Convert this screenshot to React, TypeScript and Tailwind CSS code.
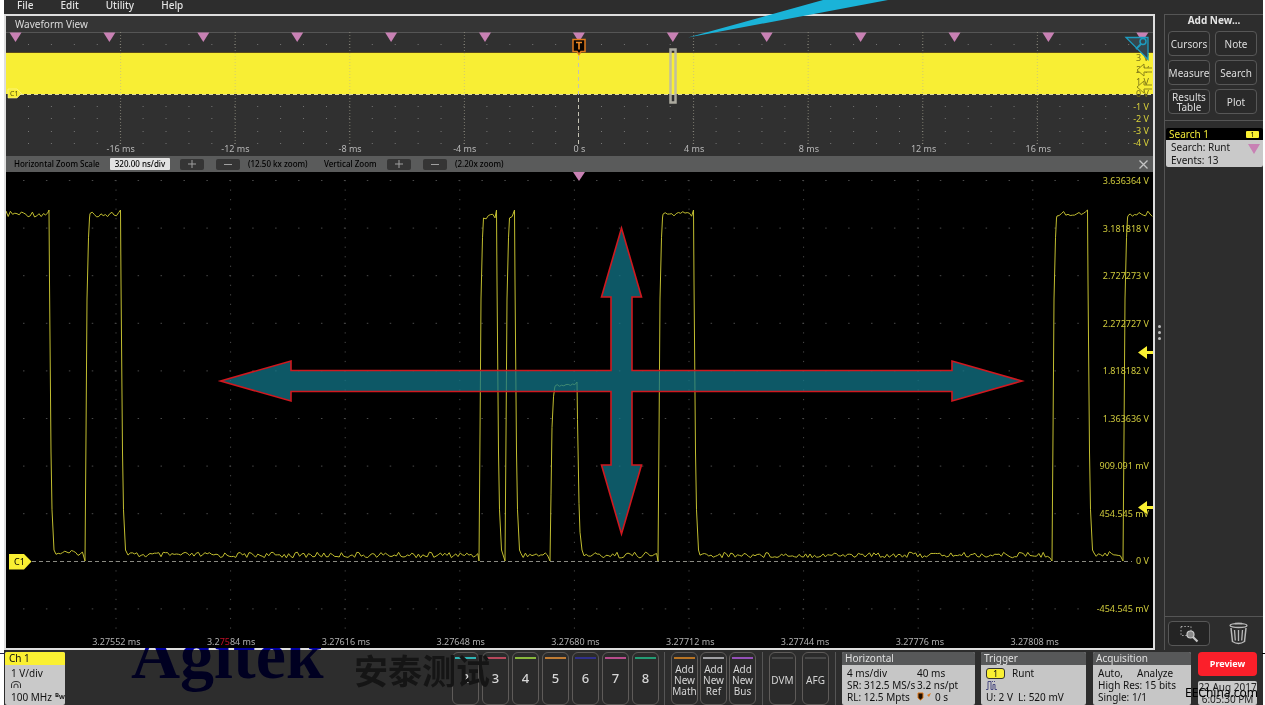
import type { ReactNode } from "react";

const PLOT_W = 1147;
const OVERVIEW_H = 124;
const ZOOM_H = 476;

const topTimes = ["-16 ms", "-12 ms", "-8 ms", "-4 ms", "0 s", "4 ms", "8 ms", "12 ms", "16 ms"];
const bottomTimes = ["3.27552", "3.27584", "3.27616", "3.27648", "3.27680", "3.27712", "3.27744", "3.27776", "3.27808"];
const topVolts = ["3 V", "2 V", "1 V", "0 V", "-1 V", "-2 V", "-3 V", "-4 V"];
const bottomVolts = [
  "3.636364 V", "3.181818 V", "2.727273 V", "2.272727 V", "1.818182 V",
  "1.363636 V", "909.091 mV", "454.545 mV", "0 V", "-454.545 mV",
];

const range = (n: number) => Array.from({ length: n }, (_, i) => i);

/* Deterministic noise in the range -1..1 */
const noise = (i: number) => {
  const s = Math.sin(i * 12.9898) * 43758.5453;
  return (s - Math.floor(s)) * 2 - 1;
};

function tracePoints() {
  const pts: string[] = [];
  let n = 0;
  const add = (x: number, y: number) => pts.push(`${x.toFixed(1)},${y.toFixed(1)}`);
  const flat = (from: number, to: number, y: number, amp: number) => {
    for (let x = from; x < to; x += 2.2) add(x, y + noise(n++) * amp);
  };
  const rise = (x: number, base: number, top: number) => {
    const h = base - top;
    add(x, base + 7);
    add(x + 1, base - h * 0.35);
    add(x + 2, base - h * 0.75);
    add(x + 3.5, base - h * 0.93);
    add(x + 4.5, top + 4);
  };
  const fall = (x: number, base: number, top: number) => {
    const h = base - top;
    add(x, top - 4);
    add(x + 0.5, top + h * 0.2);
    add(x + 2, top + h * 0.7);
    add(x + 3, top + h * 0.87);
    add(x + 5, base - 4);
  };
  const hi = 42;
  const lo = 382;
  flat(0, 43, hi, 3);
  fall(43, lo, hi);
  flat(50, 78, lo - 1, 2.5);
  rise(79, lo, hi);
  flat(84, 114, hi, 3);
  fall(114.5, lo, hi);
  flat(122, 472, lo + 1, 2.8);
  rise(473, lo, hi);
  flat(478, 490, hi + 2, 3);
  fall(490.5, lo, hi);
  rise(499, lo, hi);
  flat(504, 508, hi + 2, 3);
  fall(508.5, lo, hi);
  flat(515, 543, lo + 1, 2.5);
  rise(544, lo, 213);
  flat(549, 570, 213, 1.8);
  fall(571, lo, 214);
  flat(578, 651, lo + 1, 3);
  rise(652, lo, hi);
  flat(657, 687, hi, 3);
  fall(687.5, lo, hi);
  flat(694, 1045, lo + 1, 2.8);
  rise(1046, lo, hi);
  flat(1051, 1081, hi, 3);
  fall(1081.5, lo, hi);
  flat(1088, 1116, lo, 2.5);
  rise(1117, lo, hi);
  flat(1122, 1147, hi, 3);
  return pts.join(" ");
}

function OverviewPlot() {
  return (
    <section className="relative h-[124px] overflow-hidden bg-[#303030]">
      <svg className="absolute inset-0 h-full w-full" viewBox={`0 0 ${PLOT_W} ${OVERVIEW_H}`} preserveAspectRatio="none">
        <line x1="0" x2={PLOT_W} y1="0.5" y2="0.5" stroke="#555" />
        {[12.5, 74.5, 86.5, 99.5, 111.5].map((y) => (
          <line key={y} x1="22" x2="1135" y1={y} y2={y} stroke="#777" strokeDasharray="1 21.92" />
        ))}
        <rect x="0" y="21" width={PLOT_W} height="41" fill="#f8ee34" />
        <line x1="0" x2={PLOT_W} y1="20.5" y2="20.5" stroke="#5a4a1c" />
        {range(9).filter((i) => i !== 4).map((i) => (
          <line key={i} x1={114.6 * (i + 1)} x2={114.6 * (i + 1)} y1="0" y2="112" stroke="#b5b09a" strokeOpacity=".55" strokeDasharray="1 2" />
        ))}
        <line x1="572.500" x2="572.500" y1="24" y2="112" stroke="#c4c2b4" strokeDasharray="4 3" />
        <line x1="14" x2={PLOT_W} y1="62.5" y2="62.5" stroke="#ddd9a0" strokeDasharray="4 3" />
        <path d="M2 57h9l4.5 4.5L11 66H2z" fill="#f8ee34" stroke="#fff9a0" strokeWidth=".6" />
        {range(13).map((i) => {
          const x = 9.5 + i * 93.9;
          return <path key={i} d={`M${x - 6} 0.5h12l-6 9.5z`} fill="#c881b4" />;
        })}
        <path d="M567 7.500h12v12h-4l-2 3-2-3h-4z" fill="#0a0500" stroke="#e07a1c" strokeWidth="1.5" />
        <path d="M570 10.500h6M573 10.500v7" stroke="#f08a24" strokeWidth="1.600" fill="none" />
        <rect x="664.500" y="17.500" width="5" height="53" fill="none" stroke="#bab8ac" strokeOpacity=".9" strokeWidth="2.500" />
      </svg>
      <span className="absolute top-[57px] left-[4px] text-[7px] leading-[9px] text-[#55500c]">C1</span>
      <div className="absolute inset-x-0 bottom-0 grid grid-cols-9 px-[5%] text-center text-[9px] leading-[14px] text-[#b8b8b8]">
        {topTimes.map((t) => <span key={t}>{t}</span>)}
      </div>
      <div className="absolute top-[20px] right-[4px] flex h-[97px] flex-col justify-between text-right text-[9px] leading-[12px]">
        {topVolts.map((v, i) => (
          <span key={v} className={i < 4 ? "text-[#77701a]" : "text-[#d9d23a]"}>{v}</span>
        ))}
      </div>
      <svg className="absolute top-0 right-0 h-[66px] w-[30px]" viewBox="0 0 30 66">
        <path d="M3 5.500h22v22z" fill="#34464d" stroke="#1d9cc0" strokeWidth="1.300" />
        <circle cx="20" cy="9.500" r="3" fill="none" stroke="#1d9cc0" strokeWidth="1.500" />
        <path d="M18 12l-5 5" stroke="#1d9cc0" strokeWidth="1.800" />
        <path d="M29 36h-8v-4l-7 6 7 6v-4h8M29 53h-8v-4l-7 6 7 6v-4h8" fill="#f8ee34" stroke="#8f8718" />
      </svg>
    </section>
  );
}

function ZoomBar() {
  const step = "flex h-[11px] w-6 items-center justify-center rounded-[2px] bg-[#353535] text-[#a0a0a0]";
  const minus = <svg className="h-2 w-2" viewBox="0 0 8 8"><path d="M0 4.500h8" stroke="currentColor" /></svg>;
  const plus = <svg className="h-2 w-2" viewBox="0 0 8 8"><path d="M0 4h8M4 0v8" stroke="currentColor" /></svg>;
  return (
    <div className="flex h-4 items-center bg-[#5a5b5b] pr-[5px] pl-[8px] text-[8px] leading-4 font-medium text-black">
      <label htmlFor="scale" className="w-[96px]">Horizontal Zoom Scale</label>
      <input id="scale" defaultValue="320.00 ns/div" className="h-[12px] w-[60px] rounded-[1px] bg-[#e2e2e2] text-center text-[8px] outline-none" />
      <button aria-label="Zoom in horizontally" className={`${step} ml-[10px]`}>{plus}</button>
      <button aria-label="Zoom out horizontally" className={`${step} ml-3`}>{minus}</button>
      <span className="ml-2 w-[76px]">(12.50 kx zoom)</span>
      <span className="w-[63px]">Vertical Zoom</span>
      <button aria-label="Zoom in vertically" className={step}>{plus}</button>
      <button aria-label="Zoom out vertically" className={`${step} ml-3`}>{minus}</button>
      <span className="ml-2">(2.20x zoom)</span>
      <button aria-label="Close zoom" className="ml-auto text-[#c4c4c4]">
        <svg className="h-[9px] w-[9px]" viewBox="0 0 9 9"><path d="M.500 .500l8 8M8.500 .500l-8 8" stroke="currentColor" strokeWidth="1.300" /></svg>
      </button>
    </div>
  );
}

function ZoomPlot() {
  return (
    <section className="relative min-h-[476px] flex-1 overflow-hidden bg-black">
      <svg className="absolute inset-0 h-full w-full" viewBox={`0 0 ${PLOT_W} ${ZOOM_H}`} preserveAspectRatio="none">
        {range(9).map((i) => (
          <line key={i} x1={110 + 114.6 * i} x2={110 + 114.6 * i} y1="8" y2="462" stroke="#4a4a4a" strokeDasharray="1.200 8.320" />
        ))}
        {range(10).filter((i) => i !== 8).map((i) => (
          <line key={i} x1="17" x2="1090" y1={8.5 + 47.6 * i} y2={8.5 + 47.6 * i} stroke="#4a4a4a" strokeDasharray="1.500 21.420" />
        ))}
        <line x1="26" x2="1126" y1="389.5" y2="389.5" stroke="#8a8a82" strokeDasharray="4 3" />
        <path d="M567 0h12l-6 9z" fill="#c881b4" />
        <polyline points={tracePoints()} fill="none" stroke="#c2be30" strokeWidth="1" strokeLinejoin="round" />
      </svg>
      <div className="absolute inset-x-0 bottom-0 z-10 grid grid-cols-9 pr-[61px] pl-[53px] text-center text-[9px] leading-[13px] text-[#b0b0b0]">
        {bottomTimes.map((t, i) => (
          <span key={t}>
            {i === 1 ? <>3.2<b className="font-normal text-[#c01028]">75</b>84</> : t} ms
          </span>
        ))}
      </div>
      <div className="absolute top-[2px] right-[4px] bottom-[33px] flex flex-col justify-between text-right text-[9px] leading-[13px] text-[#cfca3c]">
        {bottomVolts.map((v) => <span key={v}>{v}</span>)}
      </div>
      <svg className="absolute inset-0 h-full w-full" viewBox={`0 0 ${PLOT_W} ${ZOOM_H}`} preserveAspectRatio="none">
        <path d="M3 382h15l7.500 7.500-7.500 8H3z" fill="#faf032" />
        <path d="M1147 179h-6v-5l-9 6.500 9 6.500v-5h6zM1147 334h-6v-5l-9 6.500 9 6.500v-5h6z" fill="#faf032" />
        <path
          d="M214.500 209l70.500-20v9.500H605V125h-9.500l20-69 20 69H626v73.500H946V189l70 20-70 20v-9.500H626V293h9.500l-20 69-20-69H605v-73.500H285v9.500z"
          fill="#11778a"
          fillOpacity=".74"
          stroke="#d0181f"
          strokeWidth="1.600"
        />
      </svg>
      <span className="absolute top-[383px] left-[8px] text-[9px] leading-[13px] text-black">C1</span>
    </section>
  );
}

function SideButton({ children }: { children: ReactNode }) {
  return (
    <button className="flex h-[25px] items-center justify-center rounded border border-[#575757] bg-[#2a2a2a] text-[10px] leading-[10px] whitespace-nowrap text-[#dedede]">
      {children}
    </button>
  );
}

function Sidebar() {
  return (
    <aside className="flex w-[99px] shrink-0 flex-col border-t border-l border-[#555]">
      <h2 className="text-center text-[10px] leading-[11px] font-bold text-[#e4e4e4]">Add New...</h2>
      <div className="mt-[5px] grid grid-cols-2 gap-x-[5px] gap-y-1 pr-[6px] pl-[3px]">
        <SideButton>Cursors</SideButton>
        <SideButton>Note</SideButton>
        <SideButton>Measure</SideButton>
        <SideButton>Search</SideButton>
        <SideButton>Results<br />Table</SideButton>
        <SideButton>Plot</SideButton>
      </div>
      <div className="mt-[6px] border-t border-[#555]" />
      <div className="mt-[7px] ml-[1px] overflow-hidden rounded-[2px] text-[10px]">
        <div className="flex h-3 items-center justify-between bg-black pr-1 pl-[3px] leading-3 text-[#f0e838]">
          Search 1 <span className="w-[13px] rounded-[1px] bg-[#faf032] text-center text-[7px] leading-[7px] text-black">1</span>
        </div>
        <div className="flex h-[27px] justify-between bg-[#c9c9c9] pl-[5px] leading-[13px] text-[#161616]">
          <p className="pt-[1px]">Search: Runt<br />Events: 13</p>
          <svg className="mt-1 mr-[3px] h-[10px] w-3" viewBox="0 0 12 10"><path d="M0 0h12L6 10z" fill="#c881b4" /></svg>
        </div>
      </div>
      <div className="mt-auto flex h-[34px] items-center border-t border-[#555] pl-[3px]">
        <button aria-label="Zoom to area" className="flex h-[25px] w-[42px] items-center justify-center rounded border border-[#575757] bg-[#242424]">
          <svg className="h-[18px] w-5" viewBox="0 0 20 18" fill="none">
            <path d="M2 1.500h10v9H2z" stroke="#aaa" strokeDasharray="1.500 1.800" />
            <circle cx="11.500" cy="9.500" r="3.500" fill="#888" stroke="#ccc" strokeWidth="1.200" />
            <path d="M14 12l4.500 4.500" stroke="#c4c4c4" strokeWidth="2.200" />
          </svg>
        </button>
        <button aria-label="Delete" className="ml-[19px]">
          <svg className="h-[23px] w-[19px]" viewBox="0 0 19 23" fill="none" stroke="#b9b9b9">
            <ellipse cx="9.500" cy="3.500" rx="8.500" ry="2" strokeWidth="1.300" />
            <path d="M6 1.500h7M2 6l1.500 13.500Q9.500 23.500 15.500 19.500L17 6" strokeWidth="1.500" />
            <path d="M5.500 8l.800 10.500M9.500 8v11M13.500 8l-.800 10.500" strokeWidth="1.300" />
          </svg>
        </button>
      </div>
    </aside>
  );
}

function ToolButton({ line, children, big = false }: { line: string; children: ReactNode; big?: boolean }) {
  return (
    <button className={`flex h-[53px] w-[27px] shrink-0 flex-col items-center rounded-md border border-[#5e5b59] bg-[#2b2b2b] whitespace-nowrap text-[#d6d6d6] ${big ? "pb-[6px] text-[13px] font-medium" : "pb-[2px] text-[10px] leading-[11px]"}`}>
      <span className={`mt-1 h-[2px] w-[21px] shrink-0 ${line}`} />
      <span className="flex flex-1 items-center">{children}</span>
    </button>
  );
}

function InfoCard({ title, className, children }: { title: string; className: string; children: ReactNode }) {
  return (
    <section className={`h-[53px] shrink-0 overflow-hidden rounded-[2px] bg-[#c6c6c6] text-[10px] whitespace-nowrap text-[#111] ${className}`}>
      <h3 className="h-[13px] bg-[#575859] pl-[3px] leading-[13px] text-[#e0e0e0]">{title}</h3>
      <div className="pt-[2px] pl-[5px] leading-[12px]">{children}</div>
    </section>
  );
}

const channels = [
  ["2", "bg-[#2fb4b4]"], ["3", "bg-[#b8485c]"], ["4", "bg-[#8ab83c]"], ["5", "bg-[#c07c34]"],
  ["6", "bg-[#30308a]"], ["7", "bg-[#b84c8c]"], ["8", "bg-[#249c74]"],
];

function BottomBar() {
  return (
    <footer className="relative flex h-[55px] items-start overflow-hidden pt-[2px] pr-[6px]">
      <section className="ml-[1px] h-[53px] w-[60px] shrink-0 overflow-hidden rounded-[2px] bg-[#c9c9c9] text-[10px] text-[#111]">
        <h3 className="h-[13px] bg-[#faf032] pl-1 leading-[13px]">Ch 1</h3>
        <div className="pt-[2px] pl-[6px] leading-3">
          <p>1 V/div</p>
          <svg className="my-[2px] h-2 w-[10px]" viewBox="0 0 10 8" fill="none" stroke="#333"><path d="M.500 7V4a4.500 3.500 0 0 1 9 0v3M3 7V5a2 2 0 0 1 4 0v2" /></svg>
          <p className="flex whitespace-nowrap">100 MHz <b className="ml-[3px] text-[6px] leading-[9px]">B</b><b className="text-[6px] leading-[13px]">W</b></p>
        </div>
      </section>
      <div className="ml-auto flex gap-x-[3px]">
        {channels.map(([n, c]) => <ToolButton key={n} line={c} big>{n}</ToolButton>)}
      </div>
      <div className="mr-[6px] ml-[5px] h-[53px] border-l border-[#555]" />
      <div className="flex gap-x-[2px]">
        <ToolButton line="bg-[#b87424]">Add<br />New<br />Math</ToolButton>
        <ToolButton line="bg-[#a0a0a4]">Add<br />New<br />Ref</ToolButton>
        <ToolButton line="bg-[#9450b8]">Add<br />New<br />Bus</ToolButton>
      </div>
      <div className="mx-[6px] h-[53px] border-l border-[#555]" />
      <div className="flex gap-x-[6px]">
        <ToolButton line="bg-[#484848]">DVM</ToolButton>
        <ToolButton line="bg-[#484848]">AFG</ToolButton>
      </div>
      <div className="mx-[6px] h-[53px] border-l border-[#555]" />
      <InfoCard title="Horizontal" className="w-[133px]">
        <div className="grid grid-cols-[70px_1fr]">
          <span>4 ms/div</span><span>40 ms</span>
          <span>SR: 312.5 MS/s</span><span>3.2 ns/pt</span>
          <span>RL: 12.5 Mpts</span>
          <span className="flex items-center">
            <svg className="mr-[3px] h-[10px] w-[15px]" viewBox="0 0 15 10"><path d="M1 1h5v5L3.500 8 1 6z" fill="#221000" stroke="#e07a1c" /><path d="M10 3l4-2-2 4z" fill="#e07a1c" /></svg>
            0 s
          </span>
        </div>
      </InfoCard>
      <InfoCard title="Trigger" className="ml-[6px] w-[105px]">
        <p className="flex items-center"><span className="mr-[7px] h-[11px] w-[19px] rounded-[3px] border border-[#333] bg-[#faf032] text-center text-[9px] leading-[9px]">1</span>Runt</p>
        <svg className="my-[1px] h-[10px] w-[11px]" viewBox="0 0 11 10" fill="none" stroke="#4a4a80"><path d="M0 9.500h2v-8h3v8h2v-5h2v5h2" /><path d="M6 1.500h4" strokeDasharray="1 1" /></svg>
        <p>U: 2 V&nbsp; L: 520 mV</p>
      </InfoCard>
      <InfoCard title="Acquisition" className="ml-[7px] w-[98px]">
        <p><span className="inline-block w-[39px]">Auto,</span>Analyze</p>
        <p>High Res: 15 bits</p>
        <p>Single: 1/1</p>
      </InfoCard>
      <div className="ml-[7px] flex w-[59px] shrink-0 flex-col gap-y-[5px]">
        <button className="h-6 rounded bg-[#fb1f2a] text-[9px] font-bold text-white">Preview</button>
        <p className="h-6 rounded-[2px] bg-[#c9c9c9] text-center text-[10px] leading-[12px] whitespace-nowrap text-[#222]">22 Aug 2017<br />6:05:30 PM</p>
      </div>
    </footer>
  );
}

export default function App() {
  return (
    <div className="relative flex min-h-screen flex-col overflow-hidden bg-white pr-[2px] pl-1 font-['Noto_Sans',sans-serif]">
      <div className="flex flex-1 flex-col bg-[#2d2d2d]">
        <nav className="flex h-[14px] items-start gap-x-[27px] pl-[13px] text-[10px] leading-[11px] font-medium text-[#e2e2e2]">
          <a href="#file">File</a>
          <a href="#edit">Edit</a>
          <a href="#utility">Utility</a>
          <a href="#help">Help</a>
        </nav>
        <div className="flex flex-1">
          <main className="flex min-w-0 flex-1 flex-col border-2 border-[#dedede]">
            <h1 className="h-4 bg-[#353535] pl-[9px] text-[10px] leading-4 text-[#dcdcdc]">Waveform View</h1>
            <OverviewPlot />
            <ZoomBar />
            <ZoomPlot />
          </main>
          <div className="flex w-[9px] shrink-0 flex-col items-center justify-center gap-y-[3px]">
            {range(3).map((i) => <i key={i} className="h-[3px] w-[3px] rounded-full bg-[#bdbdbd]" />)}
          </div>
          <Sidebar />
        </div>
        <BottomBar />
      </div>
      <svg className="pointer-events-none absolute top-0 left-[688px] h-[38px] w-[200px]" viewBox="0 0 200 38"><path d="M0 37.500L135 0H200z" fill="#1ab3d8" /></svg>
      <span className="pointer-events-none absolute bottom-[16px] left-[131px] font-['Liberation_Serif',serif] text-[68px] leading-[68px] font-bold text-[#0000b8] mix-blend-multiply">Agitek</span>
      <span className="pointer-events-none absolute bottom-[18px] left-[354px] font-['Noto_Sans_CJK_SC',sans-serif] text-[34px] leading-[34px] font-bold text-[#151515]">安泰测试</span>
      <span className="pointer-events-none absolute right-[7px] bottom-[4px] text-[12px] leading-[16px] text-black">EEChina.com</span>
      <i className="absolute bottom-[51px] left-0 h-px w-[5px] bg-[#22224a]" />
      <i className="absolute right-0 bottom-[51px] h-px w-[3px] bg-black" />
    </div>
  );
}
